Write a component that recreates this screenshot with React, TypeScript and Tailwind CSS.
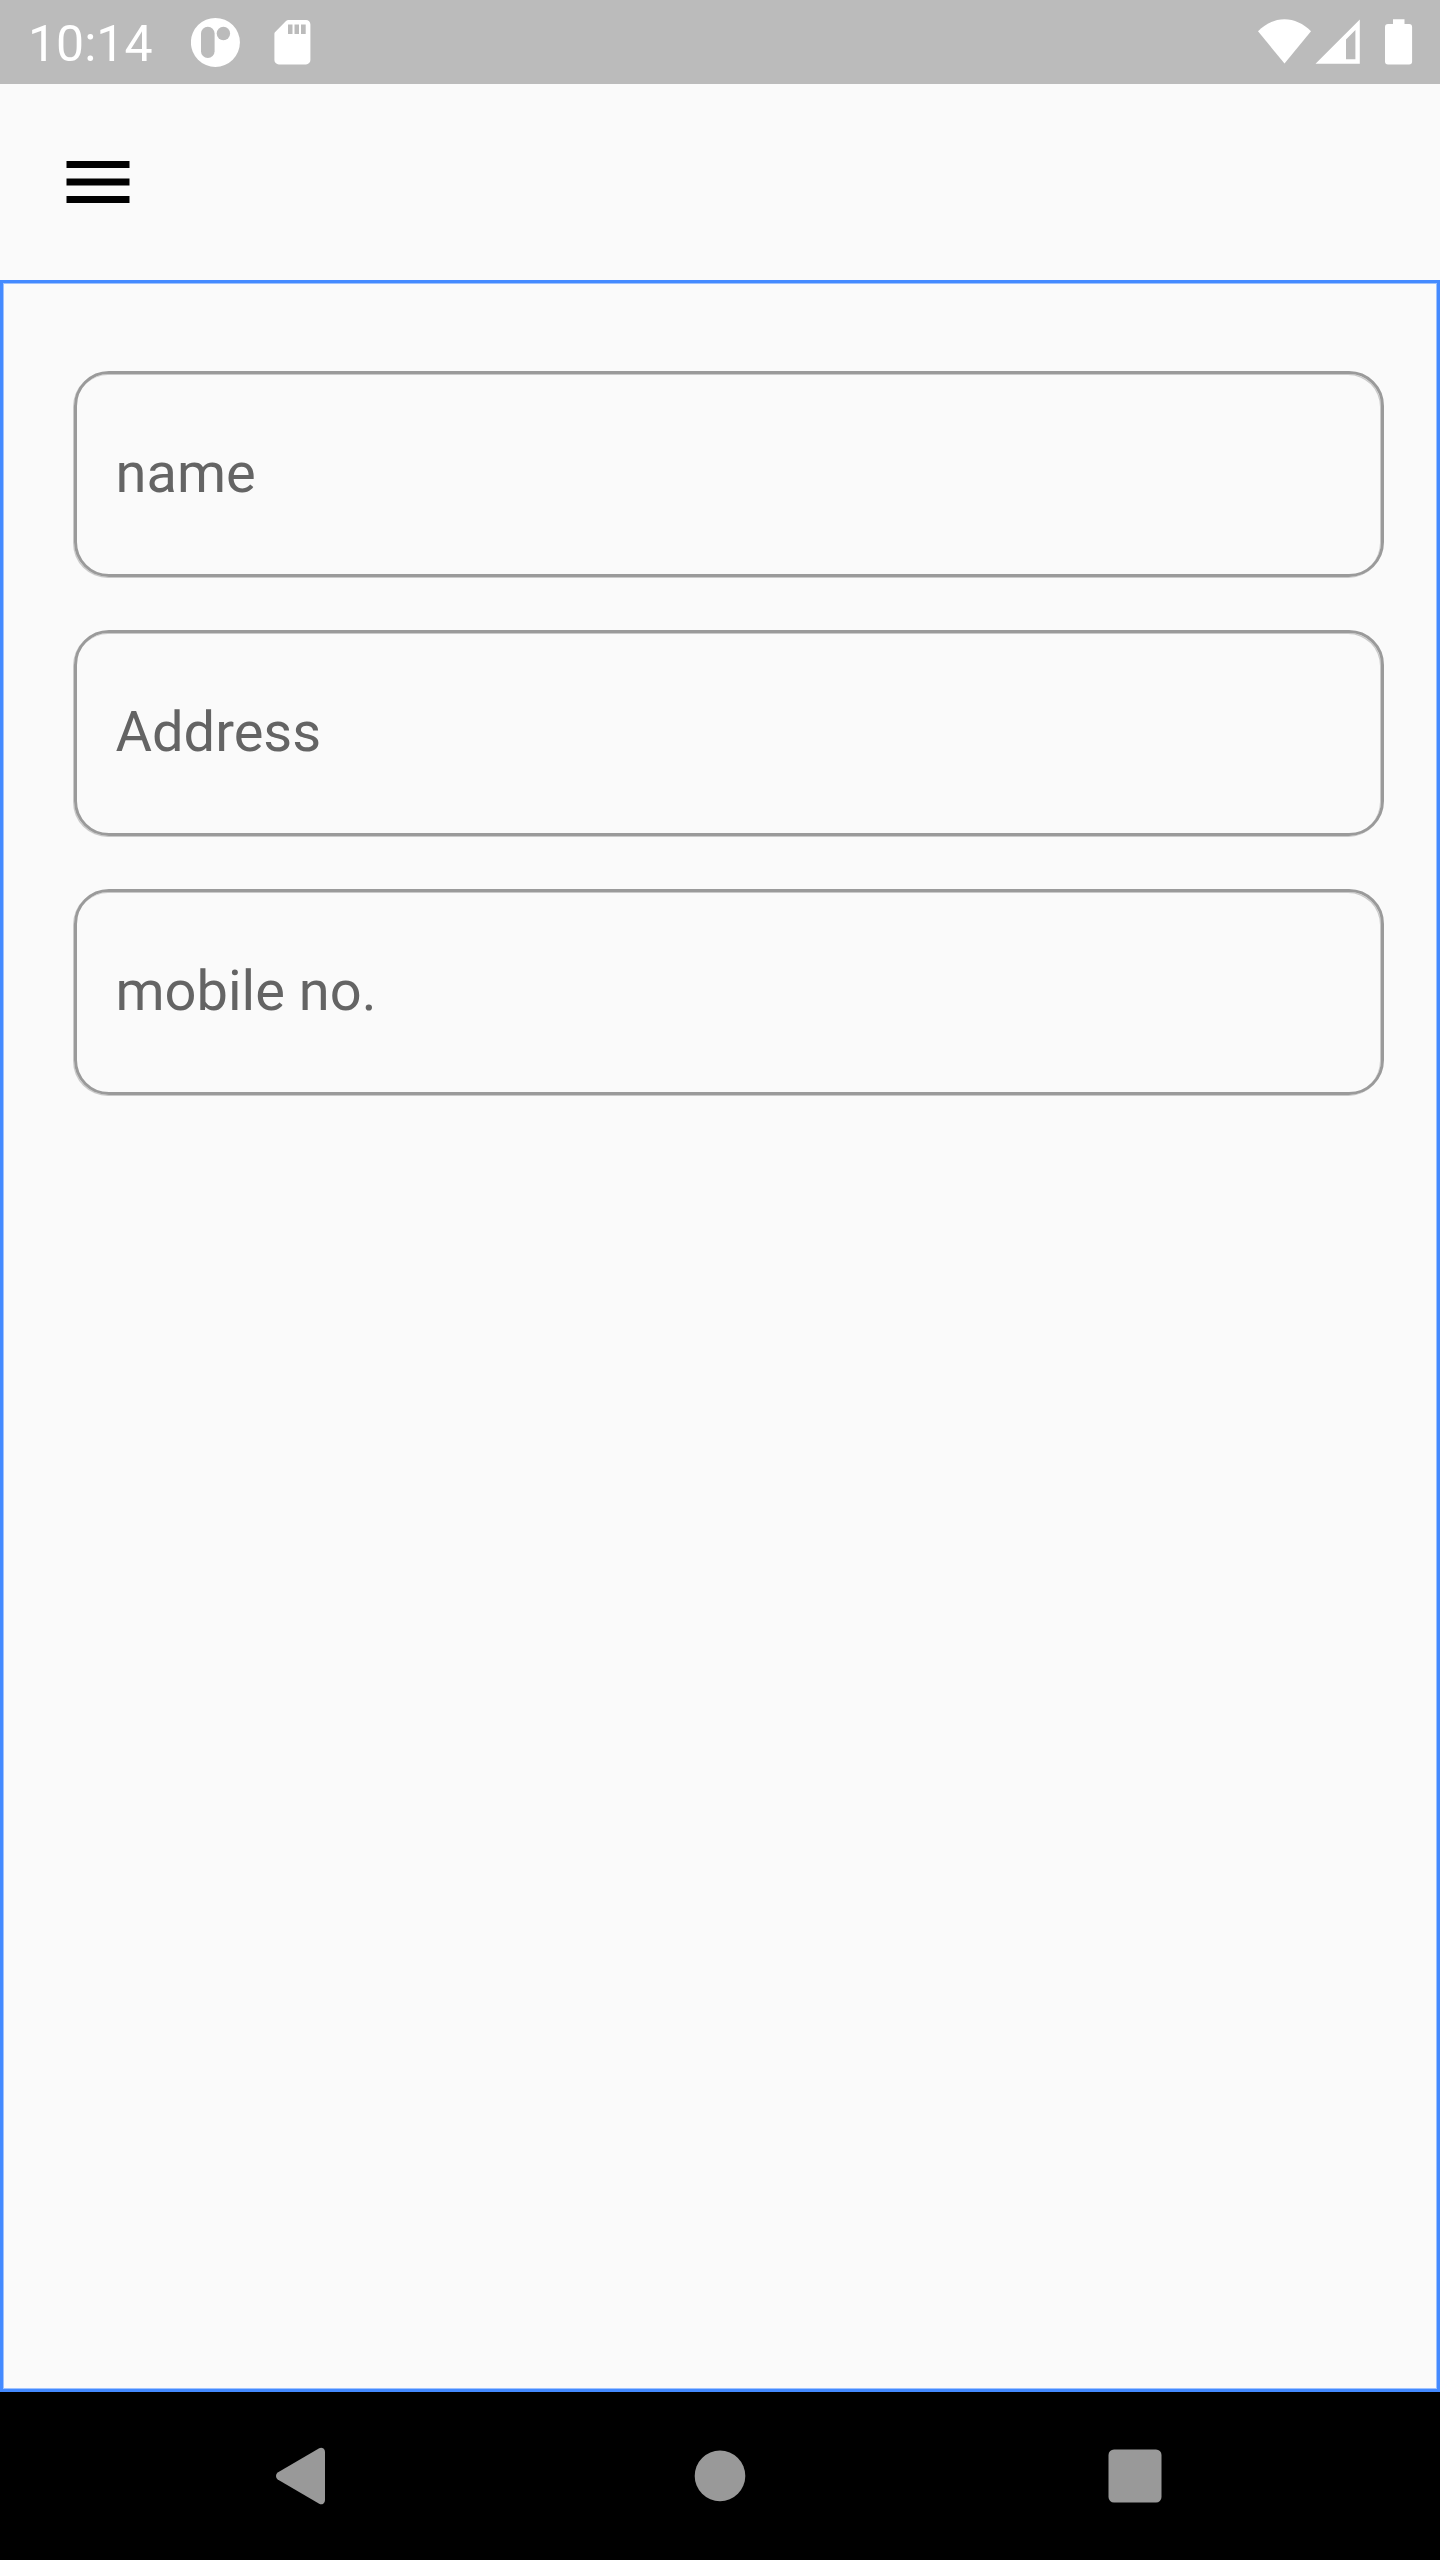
import React from 'react';

const fields: string[] = ['name', 'Address', 'mobile no.'];

function StatusBar() {
  return (
    <header className="flex h-[84px] shrink-0 items-start justify-between bg-[#bbbbbb] text-white">
      <div className="flex items-start">
        <span className="ml-[28px] mt-[15px] w-[163px] whitespace-nowrap text-[50px] leading-[58px]">10:14</span>
        <svg className="mt-[17px] h-[50px] w-[50px]" viewBox="191 17 50 50" fill="currentColor" aria-hidden="true">
          <circle cx="215.4" cy="42.4" r="24.5" />
          <rect x="201" y="26.8" width="13.6" height="31.2" rx="6.8" fill="#bbbbbb" />
          <circle cx="223.4" cy="33.5" r="6.7" fill="#bbbbbb" />
        </svg>
        <svg className="ml-[33px] mt-[20px] h-[45px] w-[37px]" viewBox="274 20 37 45" fill="currentColor" aria-hidden="true">
          <path d="M288.5 20H306a4.4 4.4 0 0 1 4.4 4.4V60a4.4 4.4 0 0 1-4.4 4.4H278.8a4.4 4.4 0 0 1-4.4-4.4V33.8q0-1 .8-1.8L286 21q1-1 2.500-1z" />
          <path d="M288 24.500h4.500V34H288zM294.500 24.500h4.500V34h-4.500zM301 24.500h4.700V34H301z" fill="#bbbbbb" />
        </svg>
      </div>
      <div className="flex items-start pr-[27px] pt-[19px]">
        <svg className="h-[46px] w-[54px]" viewBox="1258 19 54 46" fill="currentColor" aria-hidden="true">
          <path d="M1258 31.300C1265.500 23.500 1275 19.200 1284.500 19.200S1303.500 23.500 1311 31.300L1284.500 63.500z" />
        </svg>
        <svg className="ml-[3px] h-[46px] w-[45px]" viewBox="1315 19 45 46" fill="currentColor" aria-hidden="true">
          <path fillRule="evenodd" d="M1315.500 63.800L1359.800 19.500V63.800zM1346 39.500V59.300H1355.400V30.100z" />
        </svg>
        <svg className="ml-[25px] h-[46px] w-[28px]" viewBox="1385 19 28 46" fill="currentColor" aria-hidden="true">
          <path d="M1393 19.300h11.500V24h4.600a3 3 0 0 1 3 3V61.600a3 3 0 0 1-3 3H1388a3 3 0 0 1-3-3V27a3 3 0 0 1 3-3h5z" />
        </svg>
      </div>
    </header>
  );
}

function AppBar() {
  return (
    <div className="flex h-[196px] shrink-0 items-start pl-[66px] pt-[77px]">
      <button type="button" aria-label="Open menu">
        <svg className="block h-[42px] w-[64px]" viewBox="0 0 64 42" fill="#000000" aria-hidden="true">
          <path d="M.5 0h63v7H.5zM.5 17.500h63v7H.5zM.5 35h63v7H.5z" />
        </svg>
      </button>
    </div>
  );
}

function NavigationBar() {
  return (
    <nav className="flex h-[168px] shrink-0 items-start bg-black text-[#999999]">
      <svg className="ml-[276px] mt-[55px] h-[58px] w-[49px]" viewBox="0 0 49 58" fill="currentColor" aria-hidden="true">
        <path d="M1.700 25.600L43.200 1.200Q45.400 0 47.500 1.600Q49 2.800 49 5V53Q49 55.200 47.500 56.400Q45.400 58 43.200 56.800L1.700 32.400Q0 31.200 0 29T1.700 25.600z" />
      </svg>
      <svg className="ml-[369px] mt-[58px] h-[52px] w-[52px]" viewBox="0 0 52 52" fill="currentColor" aria-hidden="true">
        <circle cx="26" cy="25.900" r="25.300" />
      </svg>
      <svg className="ml-[362px] mt-[57px] h-[54px] w-[54px]" viewBox="0 0 54 54" fill="currentColor" aria-hidden="true">
        <rect x="0.500" y="0.500" width="53" height="53" rx="5.500" />
      </svg>
    </nav>
  );
}

export default function App() {
  return (
    <div className="flex h-[2560px] w-[1440px] flex-col overflow-hidden bg-[#fafafa] font-['Roboto',sans-serif]">
      <StatusBar />
      <AppBar />
      <main className="flex grow flex-col gap-[53px] border-[3px] border-[#448aff] pl-[71px] pr-[53px] pt-[88px] shadow-[inset_0_0_0_1px_#9fc2fd]">
        {fields.map((label) => (
          <div
            key={label}
            className="flex h-[206px] items-center rounded-[35px] border-[3px] border-[#9a9a9a] pb-[2px] pl-[38.5px] text-[56px] text-[#646464] shadow-[inset_-1px_1px_0_#cacaca,-1px_1px_0_#cacaca]"
          >
            {label}
          </div>
        ))}
      </main>
      <NavigationBar />
    </div>
  );
}
